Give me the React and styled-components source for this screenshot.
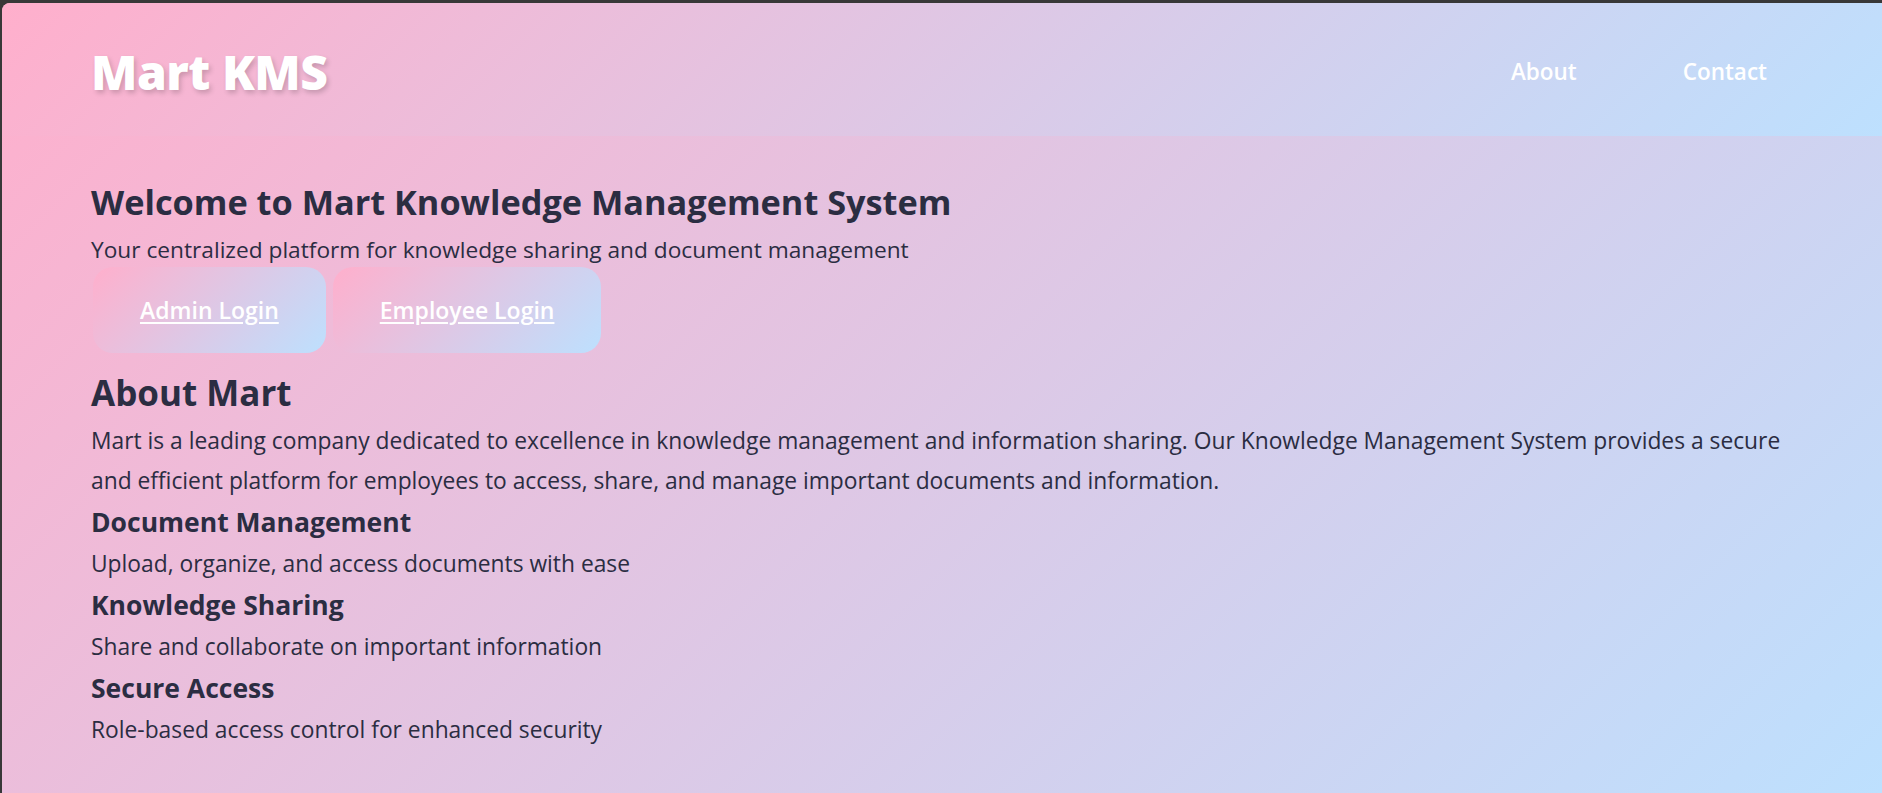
import React from 'react'
import styled, { createGlobalStyle } from 'styled-components';

const GlobalStyle = createGlobalStyle`
html, body {
  margin: 0;
  padding: 0;
  background: #383838;
}
body {
  font-family: "Open Sans", "Noto Sans", sans-serif;
  color: #2b2d42;
}
* { box-sizing: border-box; }
`

const Page = styled.div`
margin: 3px 0 0 2px;
min-height: 790px;
border-top-left-radius: 8px;
overflow: hidden;
background: linear-gradient(135deg, #ffafcc 0%, #bde0fe 100%);
`

const Header = styled.header`
height: 133px;
display: flex;
align-items: center;
justify-content: space-between;
padding: 4px 99px 0 89px;
background: linear-gradient(135deg, #ffafcc 0%, #bde0fe 100%);
`

const Logo = styled.h1`
margin: 0;
font-size: 48px;
font-weight: 800;
color: #fff;
text-shadow: 2px 3px 5px rgba(0, 0, 0, 0.18);
letter-spacing: -0.5px;
`

const Nav = styled.nav`
display: flex;
gap: 74px;

a {
  color: #fff;
  text-decoration: none;
  font-size: 22.5px;
  font-weight: 600;
  padding: 8px 16px;
}
`

const Main = styled.main`
padding: 44px 89px 40px;
`

const Title = styled.h2`
margin: 0;
font-size: ${p => p.size || 34.3}px;
font-weight: 700;
line-height: 44px;
`

const Lead = styled.p`
margin: 10px 0 0;
font-size: 22.7px;
line-height: 32px;
`

const Buttons = styled.div`
display: flex;
gap: 7px;
margin: 1px 0 0 2px;
`

const LoginButton = styled.a`
display: inline-block;
padding: 28px 47px;
border-radius: 20px;
background: linear-gradient(135deg, #ffafcc 0%, #bde0fe 100%);
color: #fff;
font-size: 23px;
font-weight: 600;
text-decoration: underline;
text-underline-offset: 3px;
line-height: 30px;
`

const Section = styled.section`
margin-top: 18px;
`

const Text = styled.p`
margin: 0;
font-size: 22.8px;
line-height: 40px;
max-width: 1700px;
`

const Intro = styled(Text)`
margin-top: 6px;
`

const Feature = styled.div`
h3 {
  margin: 0;
  font-size: 26.5px;
  font-weight: 700;
  line-height: 43px;
}
`

const features = [
  ["Document Management", "Upload, organize, and access documents with ease"],
  ["Knowledge Sharing", "Share and collaborate on important information"],
  ["Secure Access", "Role-based access control for enhanced security"],
]

const App = () => {
  return (
    <Page>
      <GlobalStyle />
      <Header>
        <Logo>Mart KMS</Logo>
        <Nav>
          <a href="#about">About</a>
          <a href="#contact">Contact</a>
        </Nav>
      </Header>
      <Main>
        <Title>Welcome to Mart Knowledge Management System</Title>
        <Lead>Your centralized platform for knowledge sharing and document management</Lead>
        <Buttons>
          <LoginButton href="#admin">Admin Login</LoginButton>
          <LoginButton href="#employee">Employee Login</LoginButton>
        </Buttons>
        <Section>
          <Title size={35}>About Mart</Title>
          <Intro>
            Mart is a leading company dedicated to excellence in knowledge management and information sharing. Our Knowledge Management System provides a secure and efficient platform for employees to access, share, and manage important documents and information.
          </Intro>
          {features.map(([title, desc]) => (
            <Feature key={title}>
              <h3>{title}</h3>
              <Text>{desc}</Text>
            </Feature>
          ))}
        </Section>
      </Main>
    </Page>
  )
}

export default App;
